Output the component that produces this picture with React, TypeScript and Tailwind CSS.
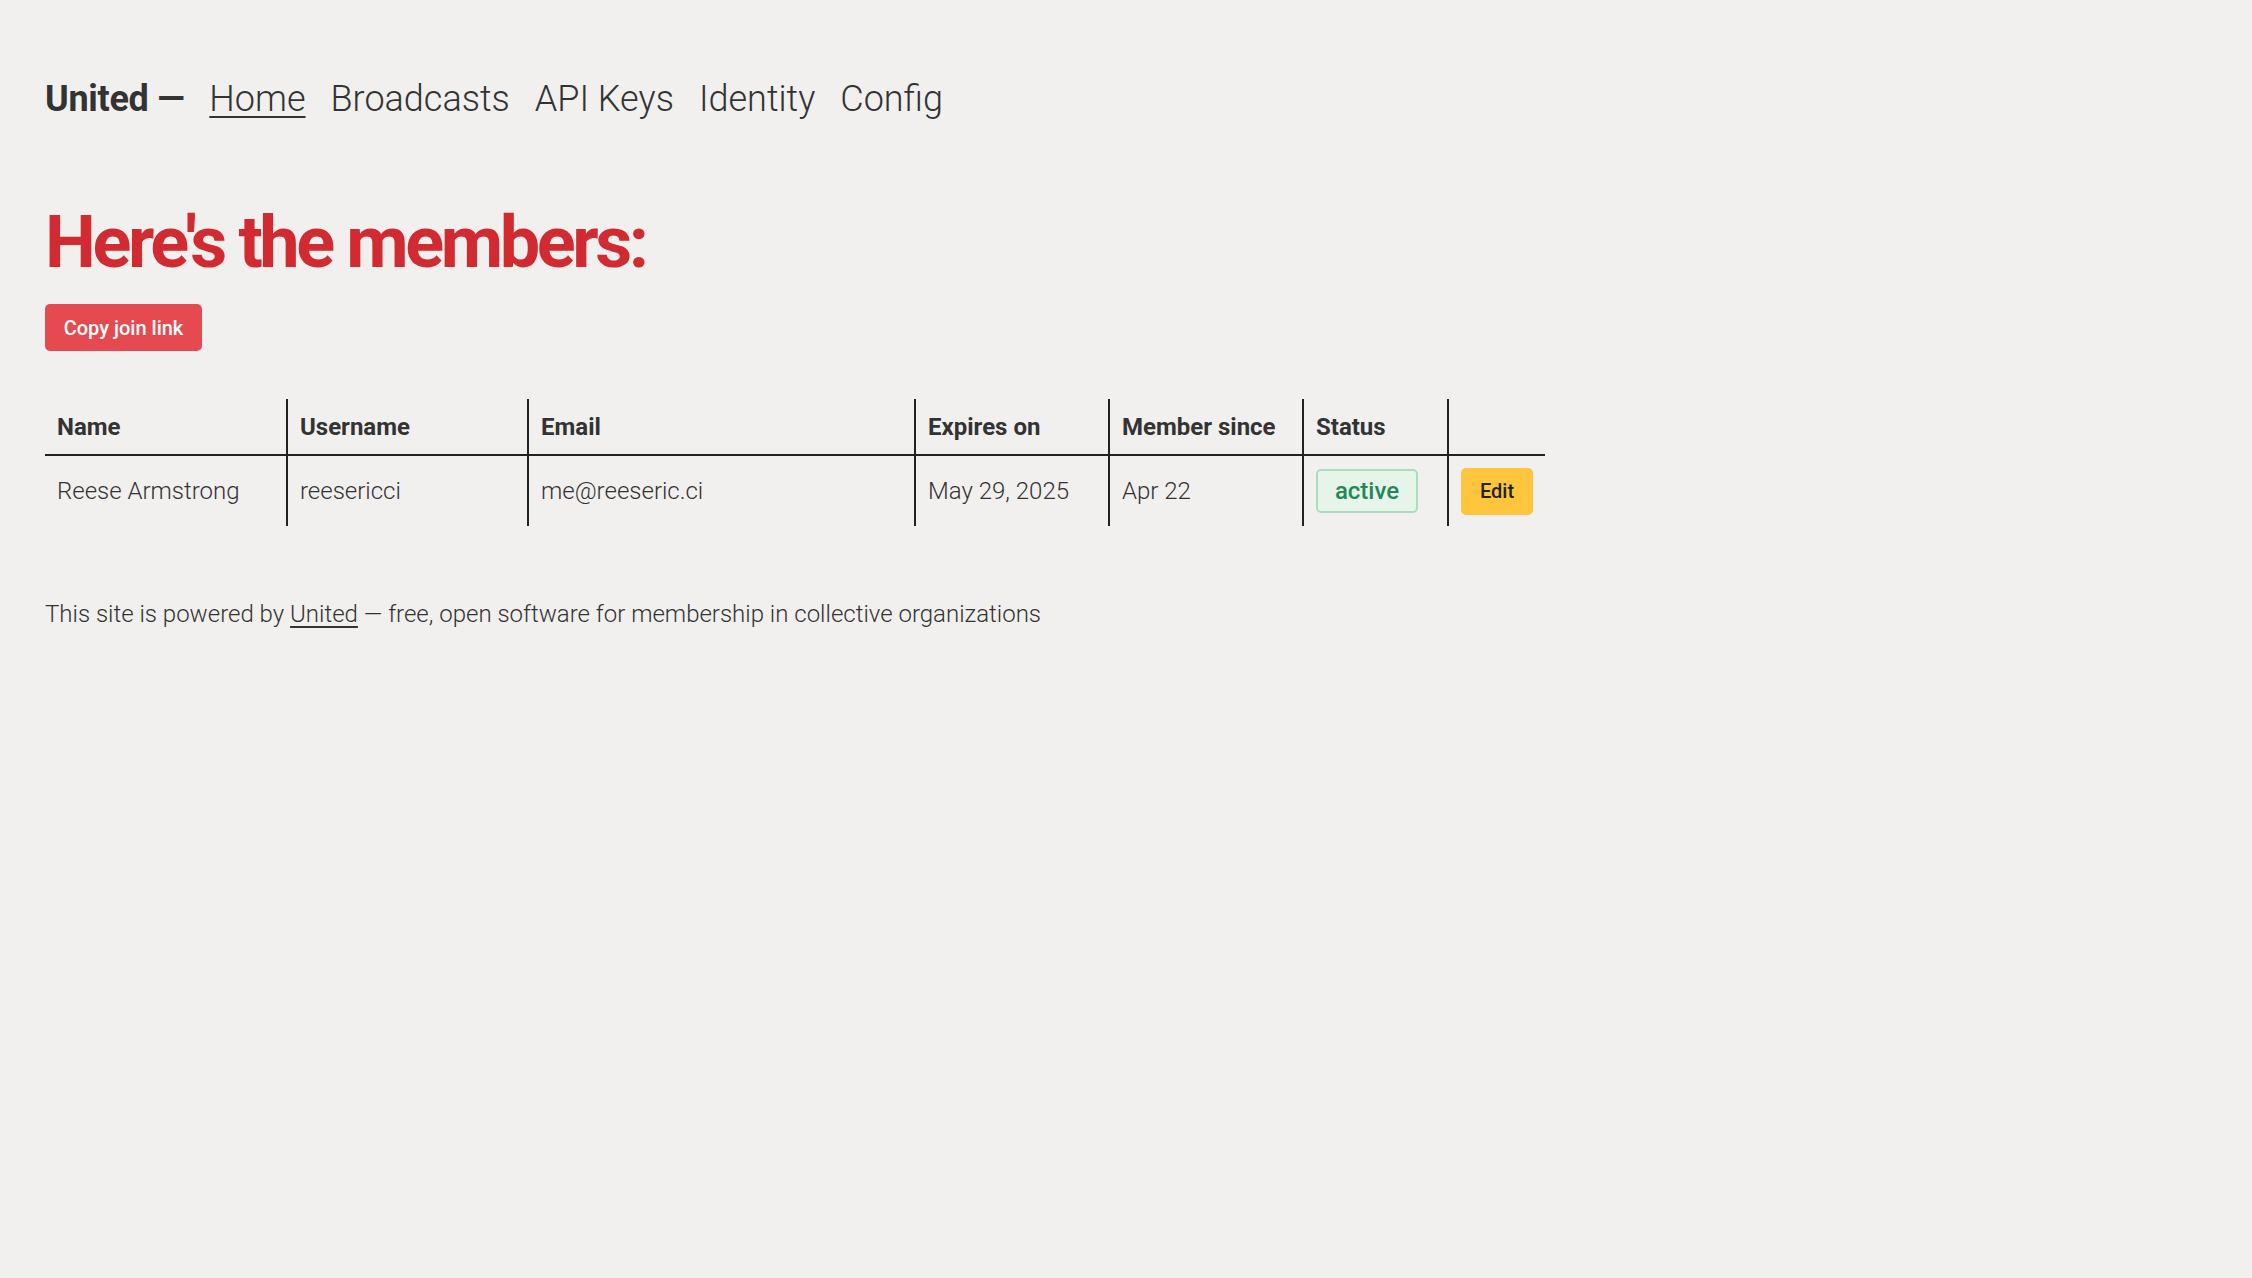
import React from 'react';

const members = [
  {
    name: 'Reese Armstrong',
    username: 'reesericci',
    email: 'me@reeseric.ci',
    expires: 'May 29, 2025',
    since: 'Apr 22',
    status: 'active',
  },
];

const navLinks = ['Home', 'Broadcasts', 'API Keys', 'Identity', 'Config'];

const App = () => {
  return (
    <div
      className="min-h-screen w-full bg-[#f1f0ee] text-[#333] px-[45px] pt-[77px]"
      style={{ fontFamily: 'Roboto, "Noto Sans", sans-serif' }}
    >
      <nav className="flex items-baseline gap-[25px] text-[36px] leading-[44px]">
        <span className="font-bold tracking-[-0.3px]">United —</span>
        {navLinks.map((link, i) => (
          <a
            key={link}
            href="#"
            className={`font-light ${i === 0 ? 'underline underline-offset-[5px] decoration-2' : ''}`}
          >
            {link}
          </a>
        ))}
      </nav>

      <h1 className="mt-[82px] text-[#d12b31] text-[72px] leading-[80px] font-bold tracking-[-3.4px]">
        Here's the members:
      </h1>

      <button className="mt-[21px] h-[47px] w-[157px] rounded-[5px] bg-[#e64a51] text-white text-[20px] font-medium">
        Copy join link
      </button>

      <table className="mt-[48px] w-[1500px] table-fixed border-collapse text-[24px]">
        <colgroup>
          <col className="w-[242px]" />
          <col className="w-[241px]" />
          <col className="w-[387px]" />
          <col className="w-[194px]" />
          <col className="w-[194px]" />
          <col className="w-[145px]" />
          <col className="w-[97px]" />
        </colgroup>
        <thead>
          <tr className="h-[56px] border-b-2 border-[#222]">
            {['Name', 'Username', 'Email', 'Expires on', 'Member since', 'Status', ''].map((h, i) => (
              <th
                key={i}
                className={`px-[12px] text-left font-bold ${i > 0 ? 'border-l-2 border-[#222]' : ''}`}
              >
                {h}
              </th>
            ))}
          </tr>
        </thead>
        <tbody>
          {members.map((m) => (
            <tr key={m.username} className="h-[71px]">
              <td className="px-[12px] font-light">{m.name}</td>
              <td className="px-[12px] font-light border-l-2 border-[#222]">{m.username}</td>
              <td className="px-[12px] font-light border-l-2 border-[#222]">{m.email}</td>
              <td className="px-[12px] font-light border-l-2 border-[#222]">{m.expires}</td>
              <td className="px-[12px] font-light border-l-2 border-[#222]">{m.since}</td>
              <td className="px-[12px] border-l-2 border-[#222]">
                <span className="inline-flex h-[44px] w-[102px] items-center justify-center rounded-[5px] border-2 border-[#acdcbf] bg-[#e6f4ea] text-[#22885a] font-medium">
                  {m.status}
                </span>
              </td>
              <td className="px-[12px] border-l-2 border-[#222]">
                <button className="h-[47px] w-[72px] rounded-[5px] bg-[#ffc53d] text-[#222] text-[20px] font-medium">
                  Edit
                </button>
              </td>
            </tr>
          ))}
        </tbody>
      </table>

      <footer className="mt-[70px] text-[24px] font-light">
        This site is powered by{' '}
        <a href="#" className="underline underline-offset-[4px]">
          United
        </a>{' '}
        — free, open software for membership in collective organizations
      </footer>
    </div>
  );
};

export default App;
